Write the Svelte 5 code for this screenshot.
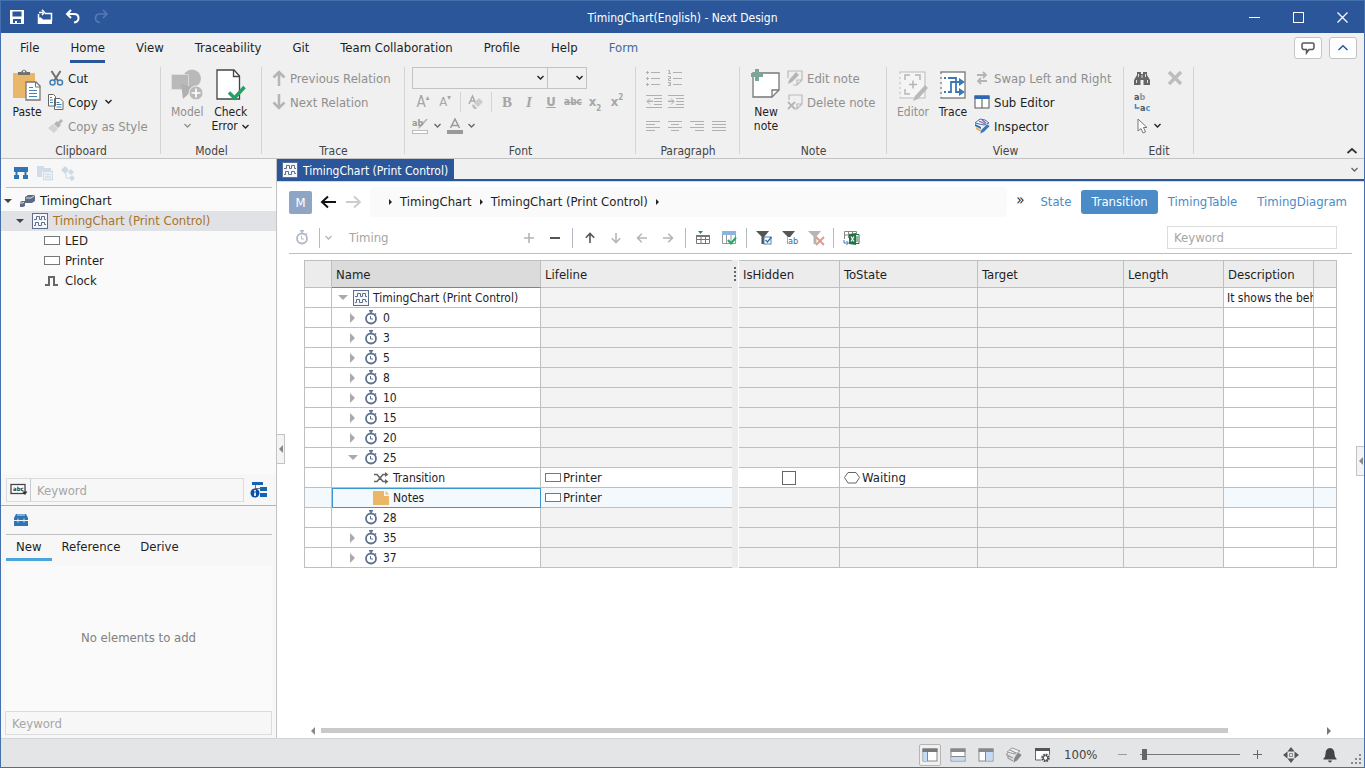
<script>
  const menuTabs = ['File', 'Home', 'View', 'Traceability', 'Git', 'Team Collaboration', 'Profile', 'Help', 'Form'];
  const viewTabs = ['State', 'Transition', 'TimingTable', 'TimingDiagram'];
  const toolTabs = ['New', 'Reference', 'Derive'];

  let activeMenu = 'Home';
  let activeView = 'Transition';
  let activeTool = 'New';

  const columns = ['Name', 'Lifeline', '', 'IsHidden', 'ToState', 'Target', 'Length', 'Description', ''];

  const rows = [
    { name: 'TimingChart (Print Control)', icon: 'chart', arrow: 'down', level: 0, description: 'It shows the beh' },
    { name: '0', icon: 'clock', arrow: 'right', level: 1 },
    { name: '3', icon: 'clock', arrow: 'right', level: 1 },
    { name: '5', icon: 'clock', arrow: 'right', level: 1 },
    { name: '8', icon: 'clock', arrow: 'right', level: 1 },
    { name: '10', icon: 'clock', arrow: 'right', level: 1 },
    { name: '15', icon: 'clock', arrow: 'right', level: 1 },
    { name: '20', icon: 'clock', arrow: 'right', level: 1 },
    { name: '25', icon: 'clock', arrow: 'down', level: 1 },
    { name: 'Transition', icon: 'shuffle', level: 2, lifeline: 'Printer', hidden: false, state: 'Waiting' },
    { name: 'Notes', icon: 'note', level: 2, lifeline: 'Printer', selected: true },
    { name: '28', icon: 'clock', level: 1 },
    { name: '35', icon: 'clock', arrow: 'right', level: 1 },
    { name: '37', icon: 'clock', arrow: 'right', level: 1 }
  ];
</script>

<!-- Small shared icons -->
{#snippet chevron()}
  <svg class="chev" width="9" height="6" viewBox="0 0 9 6"><path d="M1.500 1l3 3 3-3" fill="none" stroke="currentColor" stroke-width="1.300" /></svg>
{/snippet}

{#snippet chart()}
  <svg width="16" height="16" viewBox="0 0 16 16">
    <rect x=".5" y=".5" width="15" height="15" fill="#f4f6f9" stroke="#5d6f8c" />
    <path d="M2 6.500h2.500v-3h3v3h2v-3h3v3H14M2 12.500h1.500v-3h3v3h3v-3h3v2H14" fill="none" stroke="#5d6f8c" />
  </svg>
{/snippet}

{#snippet clock()}
  <svg width="14" height="15" viewBox="0 0 14 15">
    <circle cx="7" cy="8.500" r="5" fill="none" stroke="currentColor" stroke-width="1.800" />
    <path d="M5 .8h4M7 1v2.500M11 3.500l1 1" fill="none" stroke="currentColor" stroke-width="1.500" />
    <path d="M6.500 6v3H9" fill="none" stroke="currentColor" />
  </svg>
{/snippet}

{#snippet box()}
  <svg width="16" height="10" viewBox="0 0 16 10"><rect x=".5" y=".5" width="15" height="8" fill="#fff" stroke="#777" /></svg>
{/snippet}

{#snippet arrow(dir)}
  <svg class="arrow {dir}" width="12" height="12" viewBox="0 0 12 12"><path d="M6 11V1.500M1.800 5.700L6 1.500l4.200 4.200" fill="none" stroke="currentColor" stroke-width="1.600" /></svg>
{/snippet}

{#snippet funnel()}
  <path d="M0 1h13L8.500 6.500V14h-3V6.500z" fill="currentColor" />
{/snippet}

{#snippet lines(d)}
  <svg width="16" height="16" viewBox="0 0 16 16"><path {d} fill="none" stroke="#b0b0b0" /></svg>
{/snippet}

<div class="window">
  <header class="titlebar">
    <div class="quick">
      <button aria-label="Save">
        <svg width="16" height="16" viewBox="0 0 16 16"><path d="M1 1h14v14H1z" fill="#fff" /><path d="M3.500 2.500h9v5h-9zM4 10h8v4H4z" fill="#2b579a" /><path d="M6 12h2v2H6z" fill="#fff" /></svg>
      </button>
      <button aria-label="Open">
        <svg width="16" height="16" viewBox="0 0 16 16"><path d="M1 8.500h3l2 2h9V15H1z" fill="#fff" /><path d="M8 4.500h6.500V12M1.500 15V5M2 3.500h4M5 .8l2.500 2.700L5 6" fill="none" stroke="#fff" stroke-width="1.500" /></svg>
      </button>
      <button aria-label="Undo">
        <svg width="16" height="16" viewBox="0 0 16 16"><path d="M6 1L2 5l4 4M2 5h7c6 0 6 8 0 8.500" fill="none" stroke="#fff" stroke-width="2" /></svg>
      </button>
      <button aria-label="Redo" disabled>
        <svg width="16" height="16" viewBox="0 0 16 16"><path d="M10 1l4 4-4 4M14 5H7c-6 0-6 8 0 8.500" fill="none" stroke="#5479b3" stroke-width="1.700" /></svg>
      </button>
    </div>
    <div class="title">TimingChart(English) - Next Design</div>
    <div class="winbtns">
      <button aria-label="Minimize"><svg width="11" height="11" viewBox="0 0 11 11"><path d="M0 5.500h11" stroke="#fff" /></svg></button>
      <button aria-label="Maximize"><svg width="11" height="11" viewBox="0 0 11 11"><rect x=".5" y=".5" width="10" height="10" fill="none" stroke="#fff" /></svg></button>
      <button aria-label="Close"><svg width="11" height="11" viewBox="0 0 11 11"><path d="M.5.5l10 10M10.500.5l-10 10" stroke="#fff" stroke-width="1.200" /></svg></button>
    </div>
  </header>

  <nav class="menu">
    {#each menuTabs as tab}
      <button class="tab" class:active={tab === activeMenu} class:form={tab === 'Form'} on:click={() => (activeMenu = tab)}>{tab}</button>
    {/each}
    <div class="menu-right">
      <button class="square" aria-label="Feedback"><svg width="14" height="13" viewBox="0 0 14 13"><path d="M2.500 1h9Q13 1 13 2.500v3Q13 7 11.500 7.500H8L5.500 11V7.500h-3Q1 7 1 5.500v-3Q1 1 2.500 1z" fill="none" stroke="#555" stroke-width="1.500" /></svg></button>
      <button class="square" aria-label="Collapse"><svg width="12" height="8" viewBox="0 0 12 8"><path d="M1.500 6L6 1.700 10.500 6" fill="none" stroke="#2b579a" stroke-width="1.500" /></svg></button>
    </div>
  </nav>

  <!-- Ribbon -->
  <div class="ribbon">
    <section class="group">
      <div class="tools">
        <button class="big">
          <svg width="30" height="32" viewBox="0 0 30 32">
            <path d="M1 4h22v25H1z" fill="#eab768" />
            <path d="M6 5V3h3q3-5 6 0h3v3H6z" fill="#707070" /><circle cx="12" cy="2.500" r="1" fill="#fff" />
            <path d="M14 13h10l4 4v14H14z" fill="#fff" stroke="#777" stroke-width="1.300" /><path d="M23.500 13v5h5" fill="none" stroke="#777" />
            <path d="M17 18.500h4M17 21.500h8M17 24.500h8M17 27.500h8" stroke="#4580b5" />
          </svg>
          <span>Paste</span>
        </button>
        <div class="stack">
          <button class="small">
            <svg width="16" height="16" viewBox="0 0 16 16"><path d="M3.500 1L10 11M12.500 1L6 11" stroke="#707070" stroke-width="2" /><circle cx="4.500" cy="12.500" r="2.500" fill="#f0f0f0" stroke="#4580b5" stroke-width="1.500" /><circle cx="12" cy="12.500" r="2.500" fill="#f0f0f0" stroke="#4580b5" stroke-width="1.500" /></svg>
            <span>Cut</span>
          </button>
          <button class="small">
            <svg width="16" height="16" viewBox="0 0 16 16"><path d="M.5.5h5l2 2V12h-7zM6.500 4.500h5.500l3 3v8H6.500z" fill="#fff" stroke="#666" /><path d="M2 3.500h2M2 6h3M2 8.500h3M8.500 8.500h3M8.500 10.500h5M8.500 13h5" stroke="#4580b5" /></svg>
            <span>Copy</span>{@render chevron()}
          </button>
          <button class="small" disabled>
            <svg width="16" height="16" viewBox="0 0 16 16"><path d="M10 4l3-3 2 2-3 3 1 1-3 3-4-4 3-3z" fill="#b5b5b5" /><path d="M5 6l5 5-4 4-6-5z" fill="#d4d4d4" /></svg>
            <span>Copy as Style</span>
          </button>
        </div>
      </div>
      <h2>Clipboard</h2>
    </section>

    <section class="group">
      <div class="tools">
        <button class="big" disabled>
          <svg width="32" height="32" viewBox="0 0 32 32"><circle cx="21" cy="9.500" r="9" fill="#b9b9b9" /><path d="M.5 5.500h17v15H.5z" fill="#b9b9b9" stroke="#e4e4e4" stroke-width=".7" /><path d="M10 15l14 4-12 11z" fill="#b0b0b0" /><circle cx="25" cy="24" r="7" fill="#b9b9b9" stroke="#f0f0f0" /><path d="M20.500 24h9M25 19.500v9" stroke="#fff" stroke-width="1.700" /></svg>
          <span>Model</span>{@render chevron()}
        </button>
        <button class="big">
          <svg width="30" height="32" viewBox="0 0 30 32"><path d="M1 1h17l5.500 6v23H1z" fill="#fff" stroke="#444" stroke-width="1.300" /><path d="M17.500 1v6.500h6" fill="none" stroke="#444" stroke-width="1.300" /><path d="M13 23.500l5.500 5.500L28.500 18" fill="none" stroke="#21a366" stroke-width="3.500" /></svg>
          <span>Check<br />Error {@render chevron()}</span>
        </button>
      </div>
      <h2>Model</h2>
    </section>

    <section class="group">
      <div class="tools">
        <div class="stack">
          <button class="small" disabled>
            <svg width="14" height="16" viewBox="0 0 14 16"><path d="M7 16V2M1.500 7.500L7 2l5.500 5.500" fill="none" stroke="#b5b5b5" stroke-width="2.500" /></svg>
            <span>Previous Relation</span>
          </button>
          <button class="small" disabled>
            <svg width="14" height="16" viewBox="0 0 14 16"><path d="M7 0v14M1.500 8.500L7 14l5.500-5.500" fill="none" stroke="#b5b5b5" stroke-width="2.500" /></svg>
            <span>Next Relation</span>
          </button>
        </div>
      </div>
      <h2>Trace</h2>
    </section>

    <section class="group font">
      <div class="tools">
        <div class="stack">
          <div class="line combos">
            <label class="combo family"><select aria-label="Font family"><option></option></select>{@render chevron()}</label>
            <label class="combo size"><select aria-label="Font size"><option></option></select>{@render chevron()}</label>
          </div>
          <div class="line">
            <button class="glyph grow" disabled aria-label="Grow font">A<sup>▴</sup></button>
            <button class="glyph shrink" disabled aria-label="Shrink font">A<sup>▾</sup></button>
            <i class="sep"></i>
            <button class="glyph" disabled aria-label="Clear format"><svg width="16" height="16" viewBox="0 0 16 16"><path d="M1 10L4.500 2 8 10M2.500 7h4" fill="none" stroke="#aaa" stroke-width="1.500" /><path d="M11 4l4 4-5 5-4-4z" fill="#ccc" /><path d="M5 10l4 4-1 1H6l-2-3z" fill="#bbb" /></svg></button>
            <i class="sep"></i>
            <button class="glyph serif" disabled><b>B</b></button>
            <button class="glyph serif" disabled><em>I</em></button>
            <button class="glyph" disabled><u>U</u></button>
            <button class="glyph tiny" disabled><s>abc</s></button>
            <button class="glyph" disabled>x<sub>2</sub></button>
            <button class="glyph" disabled>x<sup>2</sup></button>
          </div>
          <div class="line colors">
            <button class="glyph drop" disabled aria-label="Highlight">
              <svg width="17" height="16" viewBox="0 0 17 16"><path d="M16 1L9 9l-3 2 1-3 7-7z" fill="#b5b5b5" /><rect x=".5" y="12.500" width="15" height="3" fill="#fff" stroke="#bbb" /><text x="0" y="8" font-size="9" font-weight="700" fill="#999">ab</text></svg>{@render chevron()}
            </button>
            <button class="glyph drop" disabled aria-label="Font color">
              <svg width="16" height="16" viewBox="0 0 16 16"><path d="M3.500 10L8 1l4.500 9M5 7.500h6" fill="none" stroke="#999" stroke-width="1.500" /><path d="M0 12h16v4H0z" fill="#999" /></svg>{@render chevron()}
            </button>
          </div>
        </div>
      </div>
      <h2>Font</h2>
    </section>

    <section class="group">
      <div class="tools">
        <div class="stack">
          <div class="line icons">
            <button disabled aria-label="Bullets">{@render lines('M0 2.500h3M0 8.500h3M0 14.500h3M1.500 1v3M1.500 7v3M1.500 13v3M5 2.500h9M5 8.500h9M5 14.500h9')}</button>
            <button disabled aria-label="Numbering">{@render lines('M0 .5h1.500v3M0 3.500h3M0 6.500h2.500v2H.5v2H3M0 12.500h2.500v3H0M1 14h2M5 2.500h9M5 8.500h9M5 14.500h9')}</button>
          </div>
          <div class="line icons">
            <button disabled aria-label="Outdent">{@render lines('M0 1.500h16M8 4.500h8M8 7.500h8M8 10.500h8M0 13.500h16M1 7.500h6M4 4.500l-3 3 3 3M1 7h6')}</button>
            <button disabled aria-label="Indent">{@render lines('M0 1.500h16M8 4.500h8M8 7.500h8M8 10.500h8M0 13.500h16M0 7.500h6M3 4.500l3 3-3 3M0 7h6')}</button>
          </div>
          <div class="line icons">
            <button disabled aria-label="Align left">{@render lines('M0 3.500h14M0 6.500h9M0 9.500h14M0 12.500h9')}</button>
            <button disabled aria-label="Center">{@render lines('M0 3.500h14M3 6.500h8M0 9.500h14M3 12.500h8')}</button>
            <button disabled aria-label="Align right">{@render lines('M0 3.500h14M5 6.500h9M0 9.500h14M5 12.500h9')}</button>
            <button disabled aria-label="Justify">{@render lines('M0 3.500h14M0 6.500h14M0 9.500h14M0 12.500h14')}</button>
          </div>
        </div>
      </div>
      <h2>Paragraph</h2>
    </section>

    <section class="group">
      <div class="tools">
        <button class="big">
          <svg width="30" height="32" viewBox="0 0 30 32"><path d="M2 4h26v17l-7 7H2z" fill="#fff" stroke="#777" stroke-width="1.300" /><path d="M21 28v-7h7" fill="none" stroke="#777" stroke-width="1.300" /><path d="M4 0h4v4h4v4H8v4H4V8H0V4h4z" fill="#7aa897" /></svg>
          <span>New<br />note</span>
        </button>
        <div class="stack">
          <button class="small" disabled>
            <svg width="16" height="16" viewBox="0 0 16 16"><path d="M1 8V1h14v9l-5 5H6M10 15v-5h5" fill="none" stroke="#b9b9b9" stroke-width="1.200" /><path d="M9 2l3 3-7 7-4 2 1-4z" fill="#b5b5b5" /></svg>
            <span>Edit note</span>
          </button>
          <button class="small" disabled>
            <svg width="16" height="16" viewBox="0 0 16 16"><path d="M2 6V1h13v9l-5 5H8M10 15v-5h5" fill="none" stroke="#b9b9b9" stroke-width="1.200" /><path d="M1 8l7 7M8 8l-7 7" stroke="#b5b5b5" stroke-width="1.800" /></svg>
            <span>Delete note</span>
          </button>
        </div>
      </div>
      <h2>Note</h2>
    </section>

    <section class="group">
      <div class="tools">
        <button class="big" disabled>
          <svg width="32" height="32" viewBox="0 0 32 32"><rect x="3" y="3" width="25" height="26" fill="#f5f5f5" stroke="#bbb" /><path d="M3 5v23" stroke="#f0f0f0" stroke-width="3" stroke-dasharray="3 2" /><path d="M8 11V6h5M18 6h5v5M8 20v5h5M12 15.500h8M16 11.500v8" fill="none" stroke="#b5b5b5" stroke-width="1.500" /><path d="M28 16l3 3-10 11-5 2 2-5z" fill="#b9b9b9" /></svg>
          <span>Editor</span>
        </button>
        <button class="big">
          <svg width="28" height="32" viewBox="0 0 28 32"><rect x="2" y="3" width="24" height="26" fill="#fff" stroke="#777" stroke-width="1.300" /><path d="M2 5v23" stroke="#f0f0f0" stroke-width="3" stroke-dasharray="3 2" /><path d="M5 9h2M9 9h8v14h5M5 23h2M9 23h3V13h10" fill="none" stroke="#3b78b5" stroke-width="1.800" /><path d="M20 9l6 4-6 4zM20 19l6 4-6 4z" fill="#3b78b5" /></svg>
          <span>Trace</span>
        </button>
        <div class="stack">
          <button class="small" disabled>
            <svg width="16" height="16" viewBox="0 0 16 16"><path d="M3 5h9M9 2l3 3-3 3M13 11H4M7 8l-3 3 3 3" fill="none" stroke="#b5b5b5" stroke-width="1.800" /></svg>
            <span>Swap Left and Right</span>
          </button>
          <button class="small">
            <svg width="16" height="16" viewBox="0 0 16 16"><rect x="1" y="2" width="14" height="12" fill="#fff" stroke="#555" /><path d="M8 5v9" stroke="#555" /><path d="M.5 1.500h15V5H.500z" fill="#2f68b0" /></svg>
            <span>Sub Editor</span>
          </button>
          <button class="small">
            <svg width="16" height="16" viewBox="0 0 16 16"><path d="M1 5l5-4 5 1 4 3-5 2z" fill="#fff" stroke="#3474b0" /><path d="M8 2l4 3M5 3l6 3" stroke="#8b5ca8" stroke-width="1.300" /><path d="M1 6l6 3v2L1 8z" fill="#2f68b0" /><path d="M2 9l5 3v2l-5-3z" fill="#e5ad55" /><path d="M13 6l3 2-6 6-4 2 1-4z" fill="#3b78b5" stroke="#f0f0f0" stroke-width=".5" /></svg>
            <span>Inspector</span>
          </button>
        </div>
      </div>
      <h2>View</h2>
    </section>

    <section class="group">
      <div class="tools">
        <div class="stack">
          <div class="line edit">
            <button aria-label="Find"><svg width="16" height="16" viewBox="0 0 16 16"><path d="M3 2h4v2h2V2h4v3l3 5v5H9.500v-5h-3v5H0v-5l3-5z" fill="#666" /><path d="M2.500 10v3M13.500 10v3M4.500 4v3M11.500 4v3M8 5v3" stroke="#ddd" /></svg></button>
            <button aria-label="Delete"><svg width="16" height="16" viewBox="0 0 16 16"><path d="M2 2l12 12M14 2L2 14" stroke="#bdbdbd" stroke-width="3.500" /></svg></button>
          </div>
          <div class="line edit">
            <button class="replace" aria-label="Replace"><svg width="18" height="22" viewBox="0 0 18 22"><path d="M1.500 13v4h4" fill="none" stroke="#3b8ac8" stroke-width="1.500" /><text x="0" y="9" font-size="9" font-weight="700" fill="#555">a<tspan fill="#999">b</tspan></text><text x="6" y="20" font-size="9" font-weight="700" fill="#555">a<tspan fill="#4a96d0">c</tspan></text></svg></button>
          </div>
          <div class="line edit">
            <button class="pick" aria-label="Select"><svg width="16" height="16" viewBox="0 0 16 16"><path d="M4 1v12l3-2.500 2 4.500 2.500-1-2-4.500H13z" fill="#fff" stroke="#777" /></svg>{@render chevron()}</button>
          </div>
        </div>
      </div>
      <h2>Edit</h2>
    </section>
    <button class="fold" aria-label="Fold ribbon"><svg width="12" height="8" viewBox="0 0 12 8"><path d="M1.500 6L6 2l4.500 4" fill="none" stroke="#333" stroke-width="1.700" /></svg></button>
  </div>

  <main class="main">
    <aside class="side">
      <div class="sidebar">
        <svg width="16" height="16" viewBox="0 0 16 16"><path d="M1 2h14v5H1zM1 10h5v4H1zM10 10h5v4h-5z" fill="#2e75b6" /><path d="M3.500 6v5M12.500 6v5" stroke="#2e75b6" stroke-width="2" /></svg>
        <svg width="16" height="16" viewBox="0 0 16 16"><path d="M0 1h7v2h7v3H5v6H0z" fill="#d0dce8" /><path d="M6.500 6.500h9v8h-9zM8 9.500h6M8 12h6" fill="none" stroke="#d0dce8" stroke-width="1.300" /></svg>
        <svg width="16" height="16" viewBox="0 0 16 16"><path d="M0 5l4-4 4 4-4 4zM10 4l3 3-3 3-3-3zM11 10l3 3-3 3-3-3z" fill="#ccdae6" /><path d="M5 8v5h4" fill="none" stroke="#ccdae6" /></svg>
      </div>
      <div class="tree">
        <div class="node"><i class="tri dark"></i>
          <svg width="15" height="14" viewBox="0 0 15 14"><path d="M5 3l3-2h6l1 1v5l-3 2H5z" fill="#5b6b82" /><path d="M6 4h5l3-2" stroke="#dfe4ea" fill="none" /><path d="M0 8l2-1h3v5l-2 1H0z" fill="#5b6b82" /><path d="M0 9h3l1-1" stroke="#dfe4ea" fill="none" /></svg>
          <span>TimingChart</span></div>
        <div class="node child current"><i class="tri dark"></i>{@render chart()}<span>TimingChart (Print Control)</span></div>
        <div class="node leaf">{@render box()}<span>LED</span></div>
        <div class="node leaf">{@render box()}<span>Printer</span></div>
        <div class="node leaf"><svg width="16" height="12" viewBox="0 0 16 12"><path d="M1 10h4V2h5v8h4" fill="none" stroke="#666" stroke-width="2" /></svg><span>Clock</span></div>
      </div>
      <div class="find">
        <div class="findbox">
          <button aria-label="Match"><svg width="18" height="13" viewBox="0 0 18 13"><rect x="1" y="1.500" width="14" height="9" fill="#fff" stroke="#444" stroke-width="1.300" /><text x="3" y="8" font-size="6" font-weight="700" fill="#333">abc</text><path d="M12 8.500h5.500L15 12z" fill="#333" /></svg></button>
          <input type="text" placeholder="Keyword" aria-label="Search model" />
        </div>
        <svg width="18" height="17" viewBox="0 0 18 17"><path d="M2 1h11v3H2zM10 6h7v4h-7zM10 12h7v4h-7z" fill="#1464b8" /><path d="M5.500 4v4M5.500 7.500h5" stroke="#777" /><circle cx="5" cy="12" r="4.500" fill="#0b4fa8" /><path d="M5 9v1.500M5 11.500v3.500" stroke="#fff" stroke-width="1.700" /></svg>
      </div>
      <div class="toolbox">
        <div class="sidebar"><svg width="16" height="16" viewBox="0 0 16 16"><path d="M1 6l2-4h10l2 4v2H1zM1 9h14v5H1z" fill="#2e75b6" /><path d="M4 3h8M5 6.500v4M11 6.500v4" stroke="#cfe2f3" /></svg></div>
        <div class="tooltabs">
          {#each toolTabs as tab}
            <button class:active={tab === activeTool} on:click={() => (activeTool = tab)}>{tab}</button>
          {/each}
        </div>
        <div class="empty">No elements to add</div>
        <input type="text" placeholder="Keyword" aria-label="Search elements" />
      </div>
    </aside>

    <section class="editor">
      <div class="doctabs">
        <button class="doctab">{@render chart()}<span>TimingChart (Print Control)</span></button>
        <button class="doclist" aria-label="Documents">{@render chevron()}</button>
      </div>

      <div class="navbar">
        <div class="badge">M</div>
        <button aria-label="Back"><svg width="17" height="14" viewBox="0 0 17 14"><path d="M16 7H2M8 1.500L2 7l6 5.500" fill="none" stroke="#111" stroke-width="2" /></svg></button>
        <button aria-label="Forward" disabled><svg width="17" height="14" viewBox="0 0 17 14"><path d="M1 7h14M9 1.500L15 7l-6 5.500" fill="none" stroke="#ccc" stroke-width="1.800" /></svg></button>
        <div class="crumbs">
          <i class="mini"></i><a href="#root">TimingChart</a><i class="mini"></i><a href="#chart">TimingChart (Print Control)</a><i class="mini"></i>
        </div>
        <span class="more">»</span>
        <div class="views">
          {#each viewTabs as view}
            <button class:active={view === activeView} on:click={() => (activeView = view)}>{view}</button>
          {/each}
        </div>
      </div>

      <div class="toolbar">
        <span class="timer">{@render clock()}</span>
        <i class="sep"></i>
        <button class="pale" disabled aria-label="Kind">{@render chevron()}</button>
        <span class="kind">Timing</span>
        <div class="actions">
          <button class="pale" aria-label="Add"><svg width="12" height="12" viewBox="0 0 12 12"><path d="M1 6h10M6 1v10" stroke="currentColor" stroke-width="1.600" /></svg></button>
          <button aria-label="Remove"><svg width="12" height="12" viewBox="0 0 12 12"><path d="M1 6h10" stroke="currentColor" stroke-width="2" /></svg></button>
          <i class="sep"></i>
          <button aria-label="Up">{@render arrow('up')}</button>
          <button class="pale" aria-label="Down">{@render arrow('down')}</button>
          <button class="pale" aria-label="Left">{@render arrow('left')}</button>
          <button class="pale" aria-label="Right">{@render arrow('right')}</button>
          <i class="sep"></i>
          <button aria-label="Insert row"><svg width="16" height="16" viewBox="0 0 16 16"><path d="M3 1h5L5.500 4z" fill="#2e9150" /><path d="M1.500 5.500h13v8h-13zM1.500 9.500h13M6 6v8M10.500 6v8" fill="none" stroke="#777" /><path d="M1 5h14v2H1z" fill="#777" /></svg></button>
          <button aria-label="Columns"><svg width="16" height="16" viewBox="0 0 16 16"><path d="M1.500 2.500h13v11h-13zM5.500 5v9M10 5v9" fill="#fff" stroke="#999" /><path d="M1 1h14v4H1z" fill="#8cb4e0" /><path d="M7 10l3 3.500 5-6" fill="none" stroke="#25a56a" stroke-width="2" /></svg></button>
          <i class="sep"></i>
          <button aria-label="Filter"><svg width="16" height="16" viewBox="0 0 16 16">{@render funnel()}<rect x="8" y="7" width="7" height="7" fill="#fff" stroke="#4a86bd" /><path d="M9.500 10l2 2 4-5" fill="none" stroke="#2f6ca8" stroke-width="1.300" /></svg></button>
          <button aria-label="Text filter"><svg width="17" height="16" viewBox="0 0 17 16">{@render funnel()}<path d="M6 7h11v8H6z" fill="#fff" /><text x="6" y="14" font-size="9" fill="#2f6ca8">ab</text></svg></button>
          <button class="pale" aria-label="Clear filter"><svg width="17" height="16" viewBox="0 0 17 16">{@render funnel()}<path d="M8 7l8 8M16 7l-8 8" stroke="#d99a8c" stroke-width="1.800" /></svg></button>
          <i class="sep"></i>
          <button aria-label="Export"><svg width="17" height="16" viewBox="0 0 17 16"><path d="M1.500 9V1.500h12V5M1.500 5h9M5.500 1.500V8M9.500 1.500V4" fill="none" stroke="#888" /><path d="M10 4.500h6v9h-6zM12 7h3M12 9h3M12 11h3" fill="#fff" stroke="#217346" /><path d="M6 4l7-1v12l-7-1z" fill="#217346" /><path d="M8 6.500l3 5M11 6.500l-3 5" stroke="#fff" stroke-width="1.200" /><path d="M1 10v3h4M3.500 11l2 2-2 2" fill="none" stroke="#3b78b5" /></svg></button>
        </div>
        <input type="text" placeholder="Keyword" aria-label="Filter rows" />
      </div>

      <div class="grid">
        <table>
          <colgroup>
            <col class="c-head" /><col class="c-name" /><col class="c-life" /><col class="c-split" /><col class="c-hid" /><col class="c-state" /><col class="c-target" /><col class="c-length" /><col class="c-desc" /><col />
          </colgroup>
          <thead>
            <tr>
              <th></th>
              {#each columns as col, i}
                <th class:sorted={i === 0} class:before={i === 1} class:split={i === 2}>{#if i === 2}<i class="grip"></i>{:else}{col}{/if}</th>
              {/each}
            </tr>
          </thead>
          <tbody>
            {#each rows as row}
              <tr class:selected={row.selected}>
                <td></td>
                <td class="name">
                  <div class="cell level{row.level}">
                    {#if row.level < 2}<span class="toggle">{#if row.arrow}<i class="tri {row.arrow}"></i>{/if}</span>{/if}
                    {#if row.icon === 'chart'}
                      {@render chart()}
                    {:else if row.icon === 'clock'}
                      <span class="watch">{@render clock()}</span>
                    {:else if row.icon === 'shuffle'}
                      <svg width="16" height="12" viewBox="0 0 16 12"><path d="M1 2.500h3l6 7h4M1 9.500h3l6-7h4" fill="none" stroke="#666" stroke-width="1.600" /><path d="M12 0l3.500 2.500L12 5zM12 7l3.500 2.500L12 12z" fill="#666" /></svg>
                    {:else}
                      <svg width="16" height="14" viewBox="0 0 16 14"><path d="M0 0h11v5h5v9H0z" fill="#eab768" /><path d="M12.500 0L16 3.500h-3.500z" fill="#eab768" /></svg>
                    {/if}
                    <span>{row.name}</span>
                  </div>
                </td>
                <td class="before" class:off={!row.lifeline}>
                  {#if row.lifeline}<div class="value">{@render box()}{row.lifeline}</div>{/if}
                </td>
                <td class="split"></td>
                <td class="center" class:off={row.hidden === undefined}>
                  {#if row.hidden !== undefined}<input type="checkbox" checked={row.hidden} aria-label="IsHidden" />{/if}
                </td>
                <td class:off={!row.state}>
                  {#if row.state}<div class="value"><svg width="16" height="12" viewBox="0 0 16 12"><path d="M4 .5h8l3.500 5L12 11H4L.5 5.500z" fill="#fff" stroke="#666" /></svg>{row.state}</div>{/if}
                </td>
                <td class="off"></td>
                <td class="off"></td>
                <td class="desc">{row.description ?? ''}</td>
                <td></td>
              </tr>
            {/each}
          </tbody>
        </table>
      </div>

      <div class="scroll"><i class="tri left"></i><div class="thumb"></div><i class="tri right"></i></div>
      <button class="handle start" aria-label="Hide left pane"><i class="tri left"></i></button>
      <button class="handle end" aria-label="Show right pane"><i class="tri left"></i></button>
    </section>
  </main>

  <footer class="status">
    <button class="pane on" aria-label="Navigator"><svg width="16" height="16" viewBox="0 0 16 16"><rect x="1" y="2" width="14" height="12" fill="#fff" stroke="#888" /><path d="M1.500 5h4v9h-4z" fill="#c2dcf7" /><path d="M5.500 4v10" stroke="#888" /><path d="M.5 1.500h15V5H.500z" fill="#777" /></svg></button>
    <button class="pane" aria-label="Output"><svg width="16" height="16" viewBox="0 0 16 16"><rect x="1" y="2" width="14" height="12" fill="#fff" stroke="#888" /><path d="M1.500 10h13v3.500h-13z" fill="#c2dcf7" /><path d="M1 9.500h14" stroke="#888" /><path d="M.5 1.500h15V5H.500z" fill="#888" /></svg></button>
    <button class="pane" aria-label="Sub editor"><svg width="16" height="16" viewBox="0 0 16 16"><rect x="1" y="2" width="14" height="12" fill="#fff" stroke="#888" /><path d="M8 5h6.500v8.500H8z" fill="#c2dcf7" /><path d="M7.500 4v10" stroke="#888" /><path d="M.5 1.500h15V5H.500z" fill="#888" /></svg></button>
    <button class="pane" aria-label="Inspector"><svg width="16" height="16" viewBox="0 0 16 16"><path d="M1 5l5-4 8 3-5 3z" fill="#f5f5f5" stroke="#999" /><path d="M1 6v2l6 3M2 9v2l5 3M4 3l6 3" fill="none" stroke="#999" stroke-width="1.300" /><path d="M12 5l4 3-5 6-4 2 1-5z" fill="#888" stroke="#f0f0f0" stroke-width=".5" /></svg></button>
    <button class="pane" aria-label="Settings"><svg width="17" height="16" viewBox="0 0 17 16"><path d="M1.500 2.500h14V13h-14z" fill="#fff" stroke="#666" /><path d="M1 1h15v3H1z" fill="#555" /><circle cx="11.500" cy="11" r="5" fill="#e4e5e7" /><circle cx="11.500" cy="11" r="3.200" fill="none" stroke="#444" stroke-width="2" stroke-dasharray="1.500 1" /><circle cx="11.500" cy="11" r="2.300" fill="#fff" stroke="#444" /></svg></button>
    <span class="percent">100%</span>
    <button aria-label="Zoom out"><svg width="9" height="9" viewBox="0 0 9 9"><path d="M0 4.500h9" stroke="#999" /></svg></button>
    <input class="zoom" type="range" min="0" max="100" value="2" aria-label="Zoom" />
    <button aria-label="Zoom in"><svg width="9" height="9" viewBox="0 0 9 9"><path d="M0 4.500h9M4.500 0v9" stroke="#666" /></svg></button>
    <button class="fit" aria-label="Fit"><svg width="16" height="16" viewBox="0 0 16 16"><path d="M8 0l3.500 4.500h-7zM8 16l3.500-4.500h-7zM0 8l4.500-3.500v7zM16 8l-4.500-3.500v7z" fill="#555" /><path d="M6.500 6.500h3v3h-3z" fill="none" stroke="#888" /></svg></button>
    <button class="bell" aria-label="Notifications"><svg width="14" height="16" viewBox="0 0 14 16"><path d="M7 1q4.500.5 4.500 6 0 3 2 4.500v1H.5v-1q2-1.500 2-4.500Q2.500 1.500 7 1zM5 13.500h4q-.5 2-2 2t-2-2z" fill="#444" /></svg></button>
    <svg class="resize" width="12" height="12" viewBox="0 0 12 12"><path d="M9 1h2M5 5h2M9 5h2M1 9h2M5 9h2M9 9h2" stroke="#888" stroke-width="2" /></svg>
  </footer>
</div>

<style>
  :global(body) {
    margin: 0;
  }
  .window {
    display: flex;
    flex-direction: column;
    height: 100vh;
    box-sizing: border-box;
    border: 1px solid #4470ae;
    border-top: 0;
    background: #f0f0f0;
    color: #1e1e1e;
    font-family: 'DejaVu Sans Condensed', 'Noto Sans', sans-serif;
    font-size: 13px;
    line-height: 16px;
  }
  .window * {
    box-sizing: border-box;
  }
  button {
    display: flex;
    align-items: center;
    justify-content: center;
    padding: 0;
    border: 0;
    background: none;
    color: inherit;
    font: inherit;
    white-space: nowrap;
  }
  svg {
    flex: none;
    display: block;
  }
  input,
  select {
    font: inherit;
    color: inherit;
    margin: 0;
    border: 1px solid #dcdcdc;
    border-radius: 0;
    background: #f7f7f7;
    min-width: 0;
  }
  input::placeholder {
    color: #a6a6a6;
    opacity: 1;
  }
  i {
    flex: none;
    display: block;
  }

  /* Title bar */
  .titlebar {
    display: grid;
    grid-template-columns: 1fr auto 1fr;
    align-items: center;
    height: 33px;
    flex: none;
    background: #2b579a;
    color: #fff;
    font-size: 12px;
    border-top: 1px solid #4470ae;
  }
  .quick {
    display: flex;
    gap: 12px;
    padding-left: 8px;
  }
  .title {
    padding-top: 2px;
  }
  .winbtns {
    display: flex;
    justify-content: flex-end;
  }
  .winbtns button {
    width: 44px;
    height: 32px;
  }

  .menu {
    display: flex;
    height: 33px;
    flex: none;
    padding: 0 7px 0 19px;
    gap: 31px;
  }
  .tab {
    height: 30px;
    padding-top: 2px;
    border-bottom: 3px solid transparent;
  }
  .tab.active {
    border-color: #2b579a;
  }
  .tab.form {
    color: #41699f;
  }
  .menu-right {
    display: flex;
    gap: 7px;
    margin-left: auto;
    padding-top: 4px;
  }
  .square {
    width: 28px;
    height: 22px;
    border: 1px solid #c3c3c3;
    border-radius: 3px;
    background: #fff;
  }

  /* Ribbon */
  .ribbon {
    display: grid;
    grid-template-columns: 160px 101px 143px 231px 104px 147px 237px 70px 1fr;
    height: 93px;
    flex: none;
    border-bottom: 1px solid #c3c3c3;
  }
  .group {
    display: flex;
    flex-direction: column;
    position: relative;
    padding: 0 10px;
    background: linear-gradient(#d4d4d4, #d4d4d4) right 1px / 1px 87px no-repeat;
  }
  .group.font {
    padding: 0 7px;
  }
  .group h2 {
    margin: auto 0 0;
    font-size: 12px;
    font-weight: 400;
    line-height: 14px;
    text-align: center;
    color: #444;
  }
  .tools {
    display: flex;
    gap: 5px;
  }
  .stack {
    display: flex;
    flex-direction: column;
  }
  .big {
    flex-direction: column;
    justify-content: flex-start;
    padding-top: 3px;
    min-width: 32px;
    font-size: 12px;
    line-height: 14px;
  }
  .big + .big {
    margin-left: 3px;
  }
  .big > span {
    margin-top: 4px;
  }
  .big .chev {
    margin-top: 4px;
  }
  .big span .chev {
    display: inline-block;
    margin: 0;
  }
  .big:disabled,
  .small:disabled {
    color: #8f8f8f;
  }
  .small {
    height: 24px;
    gap: 4px;
    justify-content: flex-start;
  }
  .small span {
    padding-top: 2px;
  }
  .small .chev {
    margin-left: 2px;
  }
  .line {
    display: flex;
    align-items: center;
    height: 24px;
  }
  .combo {
    display: flex;
    align-items: center;
    height: 22px;
    position: relative;
  }
  .combo select {
    appearance: none;
    width: 100%;
    height: 22px;
    border-color: #c3c3c3;
    background: #f0f0f0;
  }
  .combo .chev {
    position: absolute;
    right: 3px;
  }
  .family {
    width: 136px;
  }
  .size {
    width: 40px;
    margin-left: -1px;
  }
  .sep {
    width: 1px;
    height: 20px;
    margin: 0 4px;
    background: #d4d4d4;
  }
  .glyph {
    width: 22px;
    height: 22px;
    color: #a6a6a6;
    font-size: 13px;
    font-weight: 700;
  }
  .glyph sup,
  .glyph sub {
    align-self: flex-start;
    padding-top: 3px;
    font-size: 8px;
    line-height: 8px;
  }
  .glyph sub {
    align-self: flex-end;
  }
  .grow {
    font-size: 15px;
  }
  .grow,
  .shrink {
    font-weight: 400;
  }
  .serif {
    font-family: 'Liberation Serif', serif;
    font-size: 15px;
  }
  .tiny {
    font-size: 10px;
  }
  .drop {
    width: auto;
    gap: 4px;
    margin-right: 5px;
  }
  .drop .chev {
    color: #666;
  }
  .icons {
    gap: 6px;
  }
  .edit {
    gap: 17px;
  }
  .pick {
    gap: 3px;
  }
  .fold {
    align-self: end;
    justify-self: end;
    padding: 0 6px 3px;
  }

  .main {
    display: flex;
    flex: 1;
    min-height: 0;
  }

  /* Left panes */
  .side {
    display: flex;
    flex-direction: column;
    width: 276px;
    flex: none;
    border-right: 1px solid #c3c3c3;
    background: #f7f7f7;
  }
  .sidebar {
    display: flex;
    align-items: center;
    gap: 8px;
    height: 29px;
    flex: none;
    margin: 0 4px 0 5px;
    padding-left: 7px;
    border-bottom: 1px solid #bfbfbf;
  }
  .tree {
    flex: 1;
    padding-top: 3px;
    background: #fafafa;
  }
  .node {
    display: flex;
    align-items: center;
    gap: 5px;
    height: 20px;
    padding-left: 3px;
  }
  .node .tri {
    margin-right: 3px;
  }
  .node.child {
    padding-left: 15px;
  }
  .node.current {
    background: #e1e2e5;
    color: #a8742a;
  }
  .node.leaf {
    padding-left: 43px;
  }
  .tri {
    width: 0;
    height: 0;
    border: 5px solid transparent;
  }
  .tri.down {
    border-width: 5px 5px 0;
    border-top-color: #aaa;
  }
  .tri.dark {
    border-width: 4px 4px 0;
    border-top-color: #444;
  }
  .tri.right {
    border-width: 5px 0 5px 5px;
    border-left-color: #aaa;
  }
  .tri.left {
    border-width: 4px 4px 4px 0;
    border-right-color: #888;
  }
  .find {
    display: flex;
    align-items: center;
    gap: 6px;
    height: 32px;
    flex: none;
    padding: 0 8px 0 5px;
    border-bottom: 1px solid #b3b0b0;
  }
  .findbox {
    display: flex;
    flex: 1;
    height: 24px;
    border: 1px solid #dcdcdc;
  }
  .findbox button {
    width: 24px;
    border-right: 1px solid #c3c9d0;
  }
  .findbox input {
    flex: 1;
    border: 0;
    padding: 2px 6px 0;
  }
  .toolbox {
    display: flex;
    flex-direction: column;
    height: 232px;
    flex: none;
    padding-bottom: 3px;
  }
  .tooltabs {
    display: flex;
    margin-left: 5px;
    height: 30px;
    flex: none;
  }
  .tooltabs button {
    height: 26px;
    padding: 0 10px;
    border-bottom: 3px solid transparent;
  }
  .tooltabs button.active {
    border-color: #4aa5dc;
  }
  .empty {
    display: flex;
    flex: 1;
    align-items: center;
    justify-content: center;
    margin: 0 4px;
    background: #fafafa;
    color: #808080;
  }
  .toolbox input {
    height: 24px;
    margin: 0 4px;
    padding: 0 6px;
  }

  /* Editor */
  .editor {
    position: relative;
    display: flex;
    flex-direction: column;
    flex: 1;
    min-width: 0;
    background: #fff;
  }
  .doctabs {
    display: flex;
    height: 22px;
    flex: none;
    justify-content: space-between;
    background: #f0f0f0;
    border-bottom: 2px solid #2b579a;
  }
  .doctab {
    height: 22px;
    gap: 5px;
    padding: 0 6px 0 5px;
    background: #2b579a;
    color: #fff;
    font-size: 12px;
  }
  .doctab span {
    padding-top: 2px;
  }
  .doclist {
    padding: 2px 5px 0 0;
    color: #666;
  }
  .navbar {
    display: flex;
    align-items: center;
    height: 41px;
    flex: none;
    padding: 0 7px 0 12px;
    border-top: 1px solid #d6dae0;
  }
  .navbar > button {
    margin-left: 8px;
  }
  .badge {
    width: 23px;
    height: 23px;
    line-height: 23px;
    border-radius: 2px;
    background: #8fa5c6;
    color: #fff;
    text-align: center;
  }
  .crumbs {
    display: flex;
    align-items: center;
    flex: 1;
    gap: 8px;
    height: 30px;
    margin-left: 8px;
    padding-left: 19px;
    border-radius: 4px;
    background: #fafafa;
  }
  .crumbs a {
    color: #1e1e1e;
    text-decoration: none;
  }
  .mini {
    border: 3px solid transparent;
    border-width: 3px 0 3px 3px;
    border-left-color: #222;
  }
  .more {
    padding: 0 6px 4px 9px;
    font-size: 15px;
  }
  .views {
    display: flex;
    color: #4a8bc8;
  }
  .views button {
    height: 24px;
    padding: 0 10px;
    border-radius: 3px;
  }
  .views button.active {
    background: #4a8bc8;
    color: #fff;
  }
  .toolbar {
    display: flex;
    align-items: center;
    height: 32px;
    flex: none;
    margin: 0 12px;
    padding-right: 15px;
    border-bottom: 1px solid #bfbfbf;
    color: #555;
  }
  .toolbar .sep {
    background: #b5bac2;
  }
  .toolbar input {
    width: 170px;
    height: 23px;
    margin-left: auto;
    padding: 0 6px;
    background: #fff;
  }
  .timer {
    padding: 0 6px;
    color: #b0bac8;
  }
  .toolbar .pale {
    color: #b5b5b5;
  }
  .kind {
    width: 183px;
    padding-left: 16px;
    color: #a6a6a6;
  }
  .actions {
    display: flex;
    align-items: center;
  }
  .actions button {
    width: 26px;
  }
  .arrow.down {
    transform: rotate(180deg);
  }
  .arrow.left {
    transform: rotate(-90deg);
  }
  .arrow.right {
    transform: rotate(90deg);
  }

  .grid {
    flex: 1;
    min-height: 0;
    overflow: hidden;
    padding: 6px 27px 0;
  }
  table {
    width: 100%;
    table-layout: fixed;
    border-collapse: separate;
    border-spacing: 0;
  }
  .c-head {
    width: 28px;
  }
  .c-name {
    width: 209px;
  }
  .c-life {
    width: 191px;
  }
  .c-split {
    width: 7px;
  }
  .c-hid {
    width: 101px;
  }
  .c-state {
    width: 138px;
  }
  .c-target {
    width: 146px;
  }
  .c-length {
    width: 100px;
  }
  .c-desc {
    width: 90px;
  }
  th,
  td {
    padding: 0 0 0 4px;
    border: solid #bfbfbf;
    border-width: 0 1px 1px 0;
    overflow: hidden;
    white-space: nowrap;
    text-align: left;
    font-weight: 400;
  }
  th {
    height: 28px;
    padding-top: 2px;
    border-top-width: 1px;
    background: #ececec;
  }
  td {
    height: 20px;
  }
  th:first-child,
  td:first-child {
    border-left-width: 1px;
  }
  th.sorted {
    background: #dbdbdb;
    border-bottom-color: #3c96cf;
  }
  .before {
    border-right: 0;
  }
  th.split,
  td.split {
    border: 0;
    border-right: 1px solid #fff;
    padding: 0 0 0 2px;
    background: #ececec;
  }
  .grip {
    width: 2px;
    height: 14px;
    background: repeating-linear-gradient(#666 0 2px, transparent 2px 4px);
  }
  td.off {
    background: #f3f3f3;
  }
  tr.selected td:not(.off):not(.split) {
    background: #f3f9fd;
  }
  tr.selected td.name {
    outline: 1px solid #3c96cf;
    outline-offset: -1px;
  }
  .cell {
    display: flex;
    align-items: center;
    gap: 4px;
    height: 19px;
    font-size: 12px;
  }
  .level1 {
    padding-left: 10px;
  }
  .level2 {
    padding-left: 37px;
  }
  .cell > span:last-child {
    padding-top: 1px;
  }
  .toggle {
    display: flex;
    justify-content: center;
    width: 13px;
  }
  .watch {
    padding: 0 1px;
    color: #5d6f8c;
  }
  .value {
    display: flex;
    align-items: center;
    height: 19px;
    gap: 2px;
  }
  .center {
    text-align: center;
    padding: 0;
  }
  input[type='checkbox'] {
    appearance: none;
    width: 14px;
    height: 14px;
    border: 1px solid #666;
    background: #fff;
    display: block;
    margin: auto;
  }
  .desc {
    padding-left: 3px;
    font-size: 12px;
  }
  .scroll {
    display: flex;
    align-items: center;
    gap: 6px;
    height: 15px;
    flex: none;
    padding: 0 33px 0 34px;
  }
  .scroll .tri.right {
    border-width: 4px 0 4px 4px;
    border-left-color: #777;
  }
  .thumb {
    flex: 1;
    height: 5px;
    margin-right: 93px;
    background: #c9c9c9;
  }
  .handle {
    position: absolute;
    width: 8px;
    height: 30px;
    border: 1px solid #c3c3c3;
    background: #f4f4f4;
  }
  .handle.start {
    left: 0;
    top: 275px;
    border-left: 0;
  }
  .handle.end {
    right: 0;
    top: 287px;
    border-right: 0;
  }

  /* Status bar */
  .status {
    display: flex;
    align-items: center;
    justify-content: flex-end;
    height: 29px;
    flex: none;
    padding-top: 3px;
    border-top: 1px solid #d4d4d4;
    background: #e4e5e7;
    color: #444;
  }
  .pane {
    width: 22px;
    height: 22px;
    margin-right: 6px;
  }
  .pane.on {
    border: 1px solid #b5b5b5;
    border-radius: 2px;
    background: #f0f0f0;
  }
  .percent {
    width: 38px;
    margin: 0 16px 0 5px;
  }
  .zoom {
    appearance: none;
    width: 100px;
    height: 12px;
    margin: 0 13px;
    border: 0;
    background: linear-gradient(#777, #777) center / 100% 1px no-repeat;
  }
  .zoom::-webkit-slider-thumb {
    appearance: none;
    width: 5px;
    height: 11px;
    background: #666;
  }
  .fit {
    margin-left: 21px;
  }
  .bell {
    margin: 0 13px 0 24px;
  }
  .resize {
    align-self: flex-end;
    margin: 0 2px 1px 0;
  }
</style>
